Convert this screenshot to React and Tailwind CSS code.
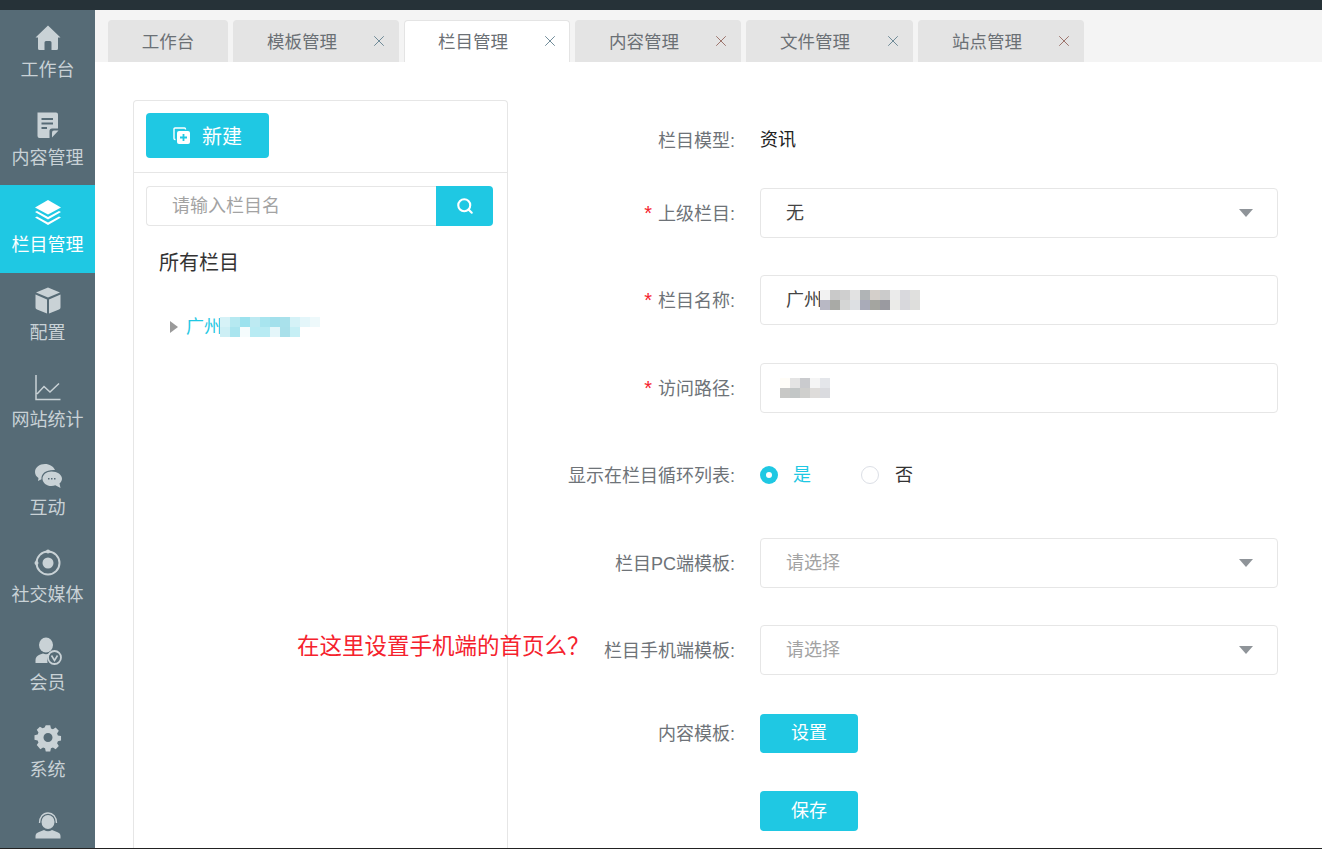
import { Search, X } from "lucide-react";

const ICON = "w-7 h-7 fill-current";

function HomeIcon() {
  return (
    <svg viewBox="0 0 28 28" className={ICON}>
      <path d="M14 1.5 26.5 13.5 24 13.5 24 24.5Q24 26 22.500 26L17.500 26 17.500 18.500Q17.500 17 16 17L12 17Q10.500 17 10.500 18.500L10.500 26 5.500 26Q4 26 4 24.500L4 13.500 1.500 13.500Z" />
    </svg>
  );
}
function NoteIcon() {
  return (
    <svg viewBox="0 0 28 28" className={ICON}>
      <path fillRule="evenodd" d="M4.500 0.500H23Q25 0.500 25 2.500V16.500H19Q16.500 16.500 16.500 19V26H6.500Q4.500 26 4.500 24ZM8.500 6V8H20V6ZM8.500 10.500V12.500H20V10.500ZM8.500 15V17H14V15Z" transform="translate(-1 0)" />
      <path d="M18 25.500V20.500Q18 18.500 20 18.500H24.500Z" />
    </svg>
  );
}
function LayersIcon() {
  return (
    <svg viewBox="0 0 28 28" className={ICON}>
      <path d="M14 1 27 8.500 14 15.500 1 8.500Z" />
      <path d="M1 13 3 12 14 18 25 12 27 13 14 20.500ZM1 18.500 3 17.500 14 23.500 25 17.500 27 18.500 14 26Z" />
    </svg>
  );
}
function CubeIcon() {
  return (
    <svg viewBox="0 0 28 28" className={ICON}>
      <path d="M14 0.500 26 5.500 14 10.500 2 5.500ZM1.500 7.500 13 12.500V26.500L3 22.500Q1.500 22 1.500 20.500ZM26.500 7.500 15 12.500V26.500L25 22.500Q26.500 22 26.500 20.500Z" />
    </svg>
  );
}
function ChartIcon() {
  return (
    <svg viewBox="0 0 28 28" className="w-7 h-7 fill-none stroke-current" strokeWidth="1.500">
      <path d="M2 1V25.500H26.500M3 20 10 12.500 16 18 25 9.500" />
    </svg>
  );
}
function ChatIcon() {
  return (
    <svg viewBox="0 0 28 28" className={ICON}>
      <path d="M11 2C5.500 2 1 5.500 1 10c0 2.500 1.300 4.500 3.500 6l-.5 3 3.500-1.800C7 11.500 12 7.500 21 8 19.500 4.500 15.500 2 11 2Z" />
      <path fillRule="evenodd" d="M17.500 9.500c-5 0-9 3.200-9 7.200s4 7.300 9 7.300c1.400 0 2.700-.2 3.800-.7L26.500 26l-1-4.500c1.500-1.300 2.500-3 2.500-4.800 0-4-4.500-7.200-10.500-7.200ZM14 16h1.500v1.500H14ZM17 16h1.500v1.500H17ZM20 16h1.500v1.500H20Z" />
    </svg>
  );
}
function OrbitIcon() {
  return (
    <svg viewBox="0 0 28 28" className="w-7 h-7">
      <circle cx="14" cy="14" r="11.500" fill="none" stroke="currentColor" strokeWidth="2" />
      <circle cx="14" cy="14" r="5.500" fill="currentColor" />
      <circle cx="2.500" cy="14" r="2" fill="currentColor" />
      <circle cx="14" cy="2.500" r="2" fill="currentColor" />
    </svg>
  );
}
function MemberIcon() {
  return (
    <svg viewBox="0 0 28 28" className={ICON}>
      <ellipse cx="12" cy="8" rx="7" ry="7.500" />
      <path d="M1.500 26V23Q1.500 19 6 17.500L9 16.500Q12 18 15 16.500L16 17Q12.500 20 13.500 26Z" />
      <circle cx="20.500" cy="20.500" r="6.500" fill="none" stroke="currentColor" strokeWidth="1.800" />
      <path d="M17.500 18.500 20.500 23.500 23.500 18.500" fill="none" stroke="currentColor" strokeWidth="1.600" />
    </svg>
  );
}
function GearIcon() {
  return (
    <svg viewBox="0 0 28 28" className={ICON}>
      <path fillRule="evenodd" d="M11.500 1h5l.8 3.500 2.200.9 3-1.900 3.500 3.500-1.900 3 .9 2.200 3.500.8v5l-3.500.8-.9 2.200 1.900 3-3.500 3.500-3-1.900-2.200.9-.8 3.500h-5l-.8-3.500-2.200-.9-3 1.900L1.500 23l1.900-3-.9-2.200L-1 17v-5l3.500-.8.900-2.200L1.500 6 5 2.500l3 1.900 2.200-.9ZM14 9.500a5 5 0 1 0 0 10 5 5 0 0 0 0-10Z" transform="translate(1.400 0.400) scale(.9)" />
    </svg>
  );
}
function AgentIcon() {
  return (
    <svg viewBox="0 0 28 28" className={ICON}>
      <ellipse cx="14" cy="10" rx="6.500" ry="7" />
      <path d="M5.500 11C5.500 5 9 1 14 1s8.500 4 8.500 10" fill="none" stroke="currentColor" strokeWidth="1.300" />
      <path d="M1.500 26.500V24Q1.500 21 5 20L10 18Q14 20.500 18 18L23 20Q26.500 21 26.500 24V26.500Z" />
    </svg>
  );
}
function NewIcon() {
  return (
    <svg viewBox="0 0 18 18" className="w-[18px] h-[18px]">
      <path d="M12.500 2.500V2a1 1 0 0 0-1-1H2a1 1 0 0 0-1 1v9.500a1 1 0 0 0 1 1h.500" fill="none" stroke="#fff" strokeWidth="1.400" />
      <rect x="4" y="4" width="13" height="13" rx="2" fill="#fff" />
      <path d="M10.500 7v7M7 10.500h7" stroke="#1fc8e3" strokeWidth="1.800" />
    </svg>
  );
}

const NAV = [
  { label: "工作台", Icon: HomeIcon },
  { label: "内容管理", Icon: NoteIcon },
  { label: "栏目管理", Icon: LayersIcon, active: true },
  { label: "配置", Icon: CubeIcon },
  { label: "网站统计", Icon: ChartIcon },
  { label: "互动", Icon: ChatIcon },
  { label: "社交媒体", Icon: OrbitIcon },
  { label: "会员", Icon: MemberIcon },
  { label: "系统", Icon: GearIcon },
  { label: "", Icon: AgentIcon },
];

const TABS = [
  { label: "工作台", width: "w-[120px]" },
  { label: "模板管理", width: "w-[166px]", close: true },
  { label: "栏目管理", width: "w-[166px]", close: true, active: true },
  { label: "内容管理", width: "w-[166px]", close: true, tint: "text-[#94685f]" },
  { label: "文件管理", width: "w-[167px]", close: true },
  { label: "站点管理", width: "w-[166px]", close: true, tint: "text-[#94685f]" },
];

const TREE_MOSAIC = [
  ["#d6f2f7", "#b6e9f1", "#9ce2ee", "#bdeaf2", "#a8e5ef", "#a3e0ec", "#a9e1eb", "#d5f2f7", "#e4f6fa", "#eef9fb"],
  ["#cdeff5", "#aae5ef", "#f5fcfd", "#b8ebf3", "#b8ebf3", "#e4f6fa", "#a9e0ea", "#c6eff5", "#ffffff", "#ffffff"],
];
const NAME_MOSAIC = [
  ["#f2f2f2", "#c9c9c9", "#cfcfcf", "#e2e2e2", "#b0b4b6", "#d4cfca", "#cbcbcb", "#ebebeb", "#d9d9dd", "#e0e0de"],
  ["#b8b8c4", "#a9aaa6", "#d5d6d5", "#dde0e3", "#a9abb8", "#a4a5a0", "#9a9aa0", "#ebebe8", "#d8d8dc", "#dededc"],
];
const PATH_MOSAIC = [
  ["#fffdf8", "#e4e4e4", "#cacbce", "#f5f5f5", "#e4e6ea"],
  ["#c8c8c6", "#c2c6c6", "#cfcfcd", "#dedcda", "#dadbdf"],
];

function Mosaic({ rows }) {
  return (
    <svg width={rows[0].length * 10} height={rows.length * 10} className="shrink-0">
      {rows.map((row, y) =>
        row.map((c, x) => <rect key={x} x={x * 10} y={y * 10} width="10" height="10" fill={c} />)
      )}
    </svg>
  );
}

function Label({ children, required }) {
  return (
    <div className="w-[227px] shrink-0 pt-[1px] text-right text-[18px] leading-[24px] text-[#6e7378] whitespace-nowrap">
      {required && <span className="text-[#f5222d] text-[20px] leading-[20px] mr-[6px]">*</span>}
      {children}:
    </div>
  );
}

function Field({ children }) {
  return (
    <div className="ml-[25px] w-[518px] h-[50px] rounded border border-[#e6e6e6] bg-white pl-[25px] pr-[24px] flex items-center text-[18px]">
      {children}
    </div>
  );
}

function Select({ value, placeholder }) {
  return (
    <Field>
      <span className={`flex-1 pt-[1px] ${placeholder ? "text-[#a3a3a3]" : "text-[#444]"}`}>{value}</span>
      <span className="w-0 h-0 border-x-[7px] border-x-transparent border-t-[8px] border-t-[#8f9499]" />
    </Field>
  );
}

function ActionButton({ children, height }) {
  return (
    <button className={`ml-[25px] w-[98px] ${height} rounded bg-[#1fc8e3] text-white text-[18px]`}>
      {children}
    </button>
  );
}

export default function App() {
  return (
    <div className="relative w-[1322px] h-[849px] overflow-hidden flex flex-col bg-white font-['Liberation_Sans','Noto_Sans_CJK_SC',sans-serif]">
      <div className="h-[10px] shrink-0 bg-[#263238]" />

      <div className="flex flex-1 min-h-0">
        <aside className="w-[95px] shrink-0 bg-[#566b76] overflow-hidden">
          {NAV.map(({ label, Icon, active }) => (
            <div
              key={label || "agent"}
              className={`h-[87.5px] pt-[14px] flex flex-col items-center ${active ? "bg-[#1fc8e3] text-white" : "text-[#c9d2d6]"}`}
            >
              <Icon />
              {label && <span className="mt-[6px] text-[18px] leading-[24px] whitespace-nowrap">{label}</span>}
            </div>
          ))}
        </aside>

        <main className="flex-1 min-w-0 flex flex-col">
          <div className="h-[52px] shrink-0 bg-[#f4f4f4] pt-[10px] pl-[13px] flex gap-[5px]">
            {TABS.map((t) => (
              <div
                key={t.label}
                className={`${t.width} h-[42px] relative flex items-center rounded-t pt-[2px] text-[17.5px] border border-b-0 ${
                  t.active ? "bg-white border-[#e4e4e4]" : "bg-[#e4e4e4] border-[#e4e4e4]"
                } text-[#6b7075] ${t.close ? "pl-[33px]" : "justify-center"}`}
              >
                {t.label}
                {t.close && (
                  <X size={18} strokeWidth={1.200} className={`absolute right-[10px] top-[11px] ${t.tint || "text-[#62808f]"}`} />
                )}
              </div>
            ))}
          </div>

          <div className="flex-1 min-h-0 flex pl-[38px] pt-[38px]">
            <section className="w-[375px] shrink-0 border border-b-0 border-[#e6e6e6] rounded-t">
              <div className="h-[72px] border-b border-[#e6e6e6] pl-[12px] pt-[12px]">
                <button className="w-[123px] h-[45px] rounded bg-[#1fc8e3] text-white text-[20px] flex items-center pl-[27px] gap-[11px]">
                  <NewIcon />
                  <span className="pt-[2px]">新建</span>
                </button>
              </div>

              <div className="mt-[13px] ml-[12px] w-[347px] h-[40px] flex">
                <div className="flex-1 border border-r-0 border-[#e6e6e6] rounded-l pl-[25px] flex items-center text-[18px] text-[#a3a3a3]">
                  请输入栏目名
                </div>
                <div className="w-[57px] rounded-r bg-[#1fc8e3] flex items-center justify-center">
                  <Search size={18} strokeWidth={2.800} className="text-white" />
                </div>
              </div>

              <div className="mt-[24px] ml-[25px] text-[20px] leading-[26px] text-[#333]">所有栏目</div>

              <div className="mt-[39px] ml-[36px] h-[24px] flex items-center">
                <span className="w-0 h-0 border-y-[6px] border-y-transparent border-l-[8px] border-l-[#9a9a9a]" />
                <span className="ml-[8px] text-[18px] text-[#1fc8e3] whitespace-nowrap">广州</span>
                <span className="-ml-[2px]">
                  <Mosaic rows={TREE_MOSAIC} />
                </span>
              </div>
            </section>

            <section className="flex-1 min-w-0 flex flex-col">
              <div className="h-[50px] mt-[15px] flex items-center">
                <Label>栏目模型</Label>
                <span className="ml-[25px] pt-[1px] text-[18px] text-[#222]">资讯</span>
              </div>
              <div className="mt-[23px] flex items-center">
                <Label required>上级栏目</Label>
                <Select value="无" />
              </div>
              <div className="mt-[37px] flex items-center">
                <Label required>栏目名称</Label>
                <Field>
                  <span className="pt-[1px] text-[#444] whitespace-nowrap">广州</span>
                  <span className="-ml-[2px]">
                    <Mosaic rows={NAME_MOSAIC} />
                  </span>
                </Field>
              </div>
              <div className="mt-[38px] flex items-center">
                <Label required>访问路径</Label>
                <Field>
                  <span className="-ml-[6px]">
                    <Mosaic rows={PATH_MOSAIC} />
                  </span>
                </Field>
              </div>
              <div className="h-[50px] mt-[37px] flex items-center">
                <Label>显示在栏目循环列表</Label>
                <div className="ml-[25px] flex items-center text-[18px]">
                  <span className="w-[18px] h-[18px] rounded-full bg-[#1fc8e3] flex items-center justify-center">
                    <span className="w-[6px] h-[6px] rounded-full bg-white" />
                  </span>
                  <span className="ml-[15px] text-[#1fc8e3]">是</span>
                  <span className="ml-[50px] w-[18px] h-[18px] rounded-full border border-[#dcdfe6] bg-white" />
                  <span className="ml-[16px] text-[#333]">否</span>
                </div>
              </div>
              <div className="mt-[38px] flex items-center">
                <Label>栏目PC端模板</Label>
                <Select value="请选择" placeholder />
              </div>
              <div className="mt-[37px] flex items-center">
                <Label>栏目手机端模板</Label>
                <Select value="请选择" placeholder />
              </div>
              <div className="mt-[39px] flex items-center">
                <Label>内容模板</Label>
                <ActionButton height="h-[39px]">设置</ActionButton>
              </div>
              <div className="mt-[38px] pl-[227px]">
                <ActionButton height="h-[40px]">保存</ActionButton>
              </div>
            </section>
          </div>
        </main>
      </div>

      {/* annotation pasted over the screenshot */}
      <div className="absolute left-[297px] top-[631px] text-[22.5px] leading-[32px] text-[#f5222d] whitespace-nowrap">
        在这里设置手机端的首页么？
      </div>
      <div className="absolute left-0 right-0 bottom-0 h-px bg-[#222]" />
    </div>
  );
}
